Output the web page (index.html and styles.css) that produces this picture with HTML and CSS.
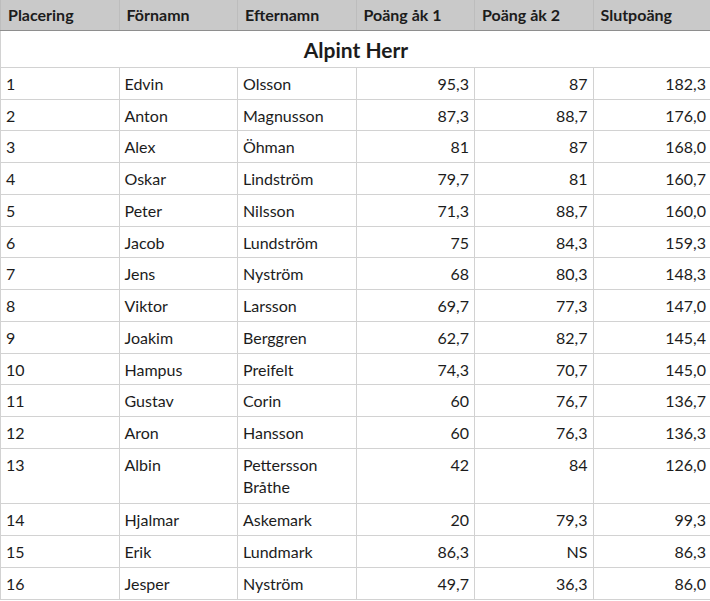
FILE: index.html
```html
<!DOCTYPE html>
<html lang="sv">
<head>
<meta charset="utf-8">
<title>Alpint Herr</title>
<link rel="stylesheet" href="styles.css">
</head>
<body>
<table class="results">
  <colgroup>
    <col class="c"><col class="c"><col class="c"><col class="c"><col class="c"><col class="c">
  </colgroup>
  <thead>
    <tr class="head">
      <th>Placering</th><th>Förnamn</th><th>Efternamn</th><th>Poäng åk 1</th><th>Poäng åk 2</th><th>Slutpoäng</th>
    </tr>
  </thead>
  <tbody>
    <tr class="title"><td colspan="6">Alpint Herr</td></tr>
    <tr><td>1</td><td>Edvin</td><td>Olsson</td><td class="n">95,3</td><td class="n">87</td><td class="n">182,3</td></tr>
    <tr><td>2</td><td>Anton</td><td>Magnusson</td><td class="n">87,3</td><td class="n">88,7</td><td class="n">176,0</td></tr>
    <tr><td>3</td><td>Alex</td><td>Öhman</td><td class="n">81</td><td class="n">87</td><td class="n">168,0</td></tr>
    <tr><td>4</td><td>Oskar</td><td>Lindström</td><td class="n">79,7</td><td class="n">81</td><td class="n">160,7</td></tr>
    <tr><td>5</td><td>Peter</td><td>Nilsson</td><td class="n">71,3</td><td class="n">88,7</td><td class="n">160,0</td></tr>
    <tr><td>6</td><td>Jacob</td><td>Lundström</td><td class="n">75</td><td class="n">84,3</td><td class="n">159,3</td></tr>
    <tr><td>7</td><td>Jens</td><td>Nyström</td><td class="n">68</td><td class="n">80,3</td><td class="n">148,3</td></tr>
    <tr><td>8</td><td>Viktor</td><td>Larsson</td><td class="n">69,7</td><td class="n">77,3</td><td class="n">147,0</td></tr>
    <tr><td>9</td><td>Joakim</td><td>Berggren</td><td class="n">62,7</td><td class="n">82,7</td><td class="n">145,4</td></tr>
    <tr><td>10</td><td>Hampus</td><td>Preifelt</td><td class="n">74,3</td><td class="n">70,7</td><td class="n">145,0</td></tr>
    <tr><td>11</td><td>Gustav</td><td>Corin</td><td class="n">60</td><td class="n">76,7</td><td class="n">136,7</td></tr>
    <tr><td>12</td><td>Aron</td><td>Hansson</td><td class="n">60</td><td class="n">76,3</td><td class="n">136,3</td></tr>
    <tr class="tall"><td>13</td><td>Albin</td><td>Pettersson<br>Bråthe</td><td class="n">42</td><td class="n">84</td><td class="n">126,0</td></tr>
    <tr><td>14</td><td>Hjalmar</td><td>Askemark</td><td class="n">20</td><td class="n">79,3</td><td class="n">99,3</td></tr>
    <tr><td>15</td><td>Erik</td><td>Lundmark</td><td class="n">86,3</td><td class="n">NS</td><td class="n">86,3</td></tr>
    <tr><td>16</td><td>Jesper</td><td>Nyström</td><td class="n">49,7</td><td class="n">36,3</td><td class="n">86,0</td></tr>
  </tbody>
</table>
</body>
</html>
```
FILE: styles.css
```css
html, body {
  margin: 0;
  padding: 0;
  background: #ffffff;
  overflow: hidden;
}
body {
  font-family: "Lato", "Open Sans", sans-serif;
  color: #1c1c1c;
  width: 710px;
}
.results {
  width: 711px;
  table-layout: fixed;
  border-collapse: collapse;
}
.results .c {
  width: 118.5px;
}
.results th,
.results td {
  border: 1px solid #d2d2d2;
  padding: 5px 5px 4px 5px;
  line-height: 21.75px;
  font-size: 16px;
  text-align: left;
  vertical-align: top;
  white-space: nowrap;
  overflow: hidden;
}
.results .head th {
  background: #c9c9c9;
  font-weight: 700;
  font-size: 16px;
  height: 20px;
  padding: 4px 6px 4px 7px;
  border-top: none;
  border-color: #bdbdbd;
  border-bottom: 1px solid #8e8e8e;
  vertical-align: middle;
}
.results .title td {
  text-align: center;
  font-weight: 700;
  font-size: 21px;
  height: 26px;
  padding: 6px 6px 4px 6px;
  vertical-align: middle;
}
.results td.n {
  text-align: right;
  padding-right: 5px;
}
.results .tall td {
  padding-bottom: 6px;
}
```
